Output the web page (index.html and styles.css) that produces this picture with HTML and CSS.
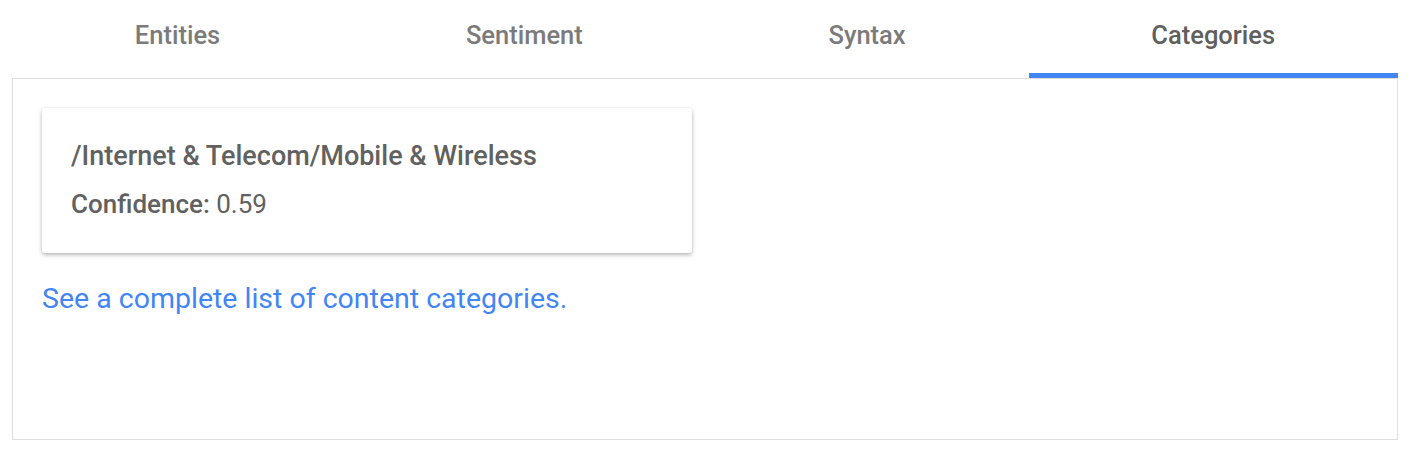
FILE: index.html
```html
<!DOCTYPE html>
<html>
<head>
<meta charset="utf-8">
<link rel="stylesheet" href="styles.css">
</head>
<body>
<div class="wrap">
  <div class="tabs">
    <div class="tab">Entities</div>
    <div class="tab">Sentiment</div>
    <div class="tab">Syntax</div>
    <div class="tab active">Categories</div>
  </div>
  <div class="panel">
    <div class="card">
      <div class="cat-name">/Internet &amp; Telecom/Mobile &amp; Wireless</div>
      <div class="confidence"><span class="label">Confidence:</span> 0.59</div>
    </div>
    <a class="link" href="#">See a complete list of content categories.</a>
  </div>
</div>
</body>
</html>
```
FILE: styles.css
```css
html, body {
  margin: 0;
  padding: 0;
  background: #ffffff;
}
body {
  font-family: Roboto, "Liberation Sans", sans-serif;
}
.wrap {
  width: 1386px;
  margin-left: 12px;
}
.tabs {
  display: flex;
}
.tab {
  flex: 1 1 auto;
  box-sizing: border-box;
  height: 78px;
  padding-top: 20px;
  text-align: center;
  font-size: 25.5px;
  line-height: 30px;
  font-weight: 500;
  color: #7b7b7b;
  border-bottom: 5px solid transparent;
}
.tab.active {
  color: #5f5f5f;
  border-bottom-color: #4285f4;
}
.panel {
  box-sizing: border-box;
  height: 362px;
  border: 1px solid #dedede;
  padding: 29px;
}
.card {
  width: 650px;
  box-sizing: border-box;
  padding: 29px 29px 31px;
  border-radius: 3px;
  box-shadow: 0 2px 4px rgba(0,0,0,0.28), 0 0 2px rgba(0,0,0,0.08);
  color: #616161;
}
.cat-name {
  font-size: 27px;
  line-height: 38px;
  font-weight: 500;
}
.confidence {
  margin-top: 11px;
  font-size: 26px;
  line-height: 36px;
}
.confidence .label {
  font-weight: 500;
}
.link {
  display: block;
  margin-top: 28px;
  font-size: 28.5px;
  line-height: 36px;
  color: #4285f4;
  text-decoration: none;
}
```
